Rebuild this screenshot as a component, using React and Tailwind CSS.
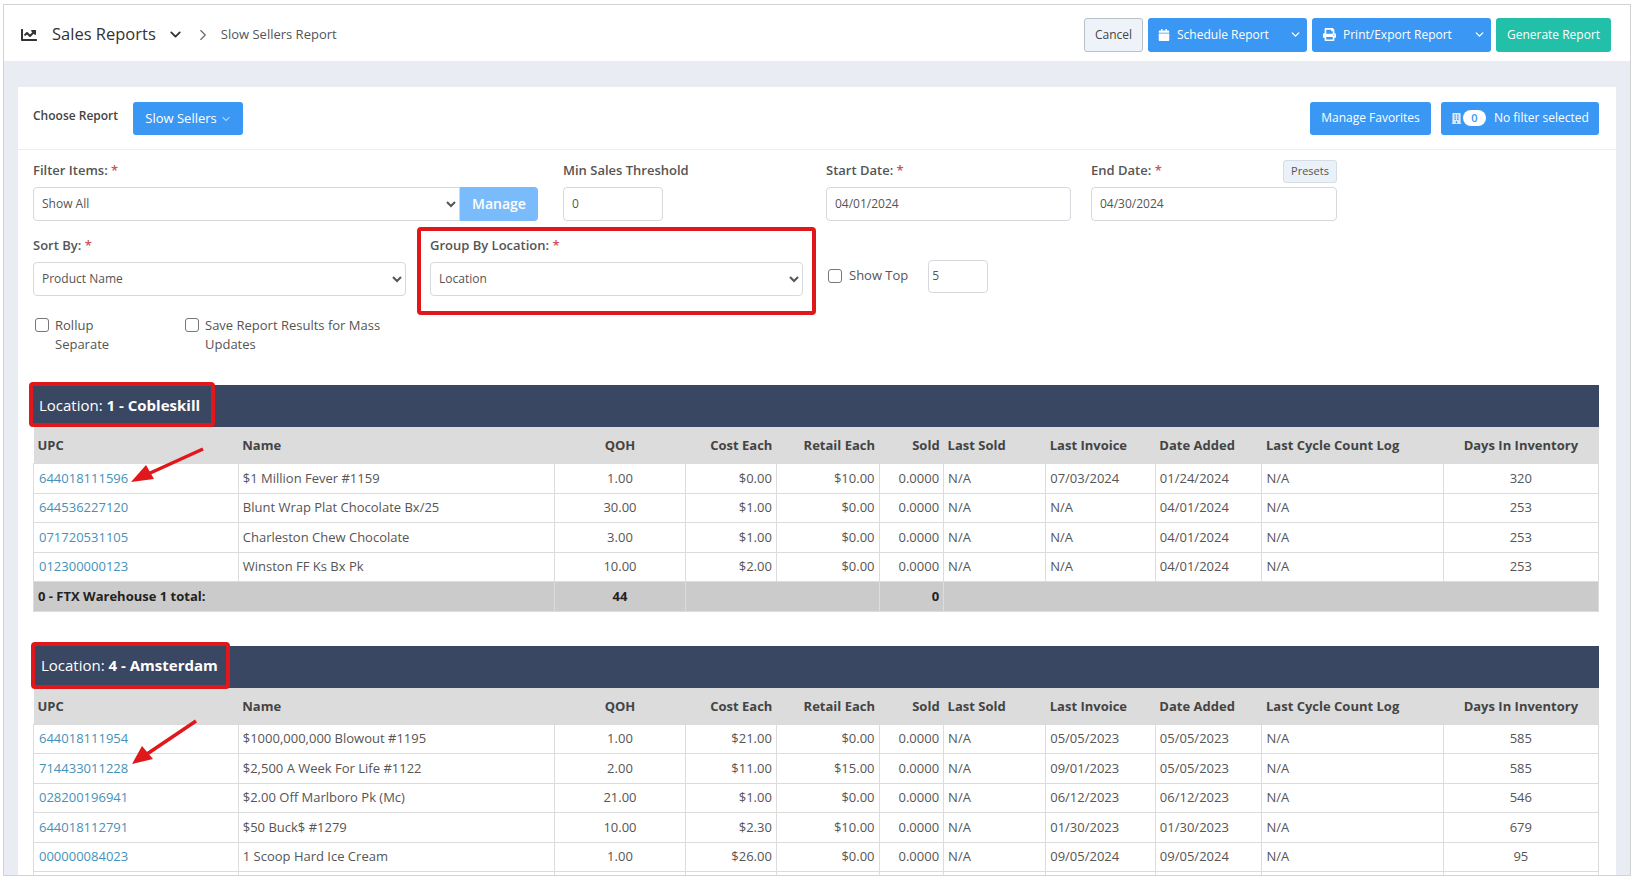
import { ChevronDown, ChevronRight } from "lucide-react";
import { FaBuilding, FaCalendar, FaChartLine, FaPrint } from "react-icons/fa";

const columns = [
  "w-[204.5px]",
  "w-[315.5px]",
  "w-[131.5px]",
  "w-[90.5px]",
  "w-[102.5px]",
  "w-[64.5px]",
  "w-[102px]",
  "w-[109.5px]",
  "w-[106.5px]",
  "w-[181px]",
  "w-[155px]",
];

const coblekillRows = [
  ["644018111596", "$1 Million Fever #1159", "1.00", "$0.00", "$10.00", "0.0000", "N/A", "07/03/2024", "01/24/2024", "N/A", "320"],
  ["644536227120", "Blunt Wrap Plat Chocolate Bx/25", "30.00", "$1.00", "$0.00", "0.0000", "N/A", "N/A", "04/01/2024", "N/A", "253"],
  ["071720531105", "Charleston Chew Chocolate", "3.00", "$1.00", "$0.00", "0.0000", "N/A", "N/A", "04/01/2024", "N/A", "253"],
  ["012300000123", "Winston FF Ks Bx Pk", "10.00", "$2.00", "$0.00", "0.0000", "N/A", "N/A", "04/01/2024", "N/A", "253"],
];

const amsterdamRows = [
  ["644018111954", "$1000,000,000 Blowout #1195", "1.00", "$21.00", "$0.00", "0.0000", "N/A", "05/05/2023", "05/05/2023", "N/A", "585"],
  ["714433011228", "$2,500 A Week For Life #1122", "2.00", "$11.00", "$15.00", "0.0000", "N/A", "09/01/2023", "05/05/2023", "N/A", "585"],
  ["028200196941", "$2.00 Off Marlboro Pk (Mc)", "21.00", "$1.00", "$0.00", "0.0000", "N/A", "06/12/2023", "06/12/2023", "N/A", "546"],
  ["644018112791", "$50 Buck$ #1279", "10.00", "$2.30", "$10.00", "0.0000", "N/A", "01/30/2023", "01/30/2023", "N/A", "679"],
  ["000000084023", "1 Scoop Hard Ice Cream", "1.00", "$26.00", "$0.00", "0.0000", "N/A", "09/05/2024", "09/05/2024", "N/A", "95"],
  ["", "", "", "", "", "", "", "", "", "", ""],
];

const Star = () => <span className="text-[#c9535b]"> *</span>;

function Label({ children, required }) {
  return (
    <label className="block h-[20px] whitespace-nowrap text-[13px] leading-[20px] font-semibold text-[#555]">
      {children}
      {required && <Star />}
    </label>
  );
}

function Select({ value, className }) {
  return (
    <select
      defaultValue={value}
      className={`h-[34px] rounded-[4px] border border-[#d5d8dc] bg-white pb-[2px] pl-[4px] pr-[2px] text-[12px] text-[#555] ${className}`}
    >
      <option>{value}</option>
    </select>
  );
}

function Field({ value, className }) {
  return (
    <input
      readOnly
      defaultValue={value}
      className={`rounded-[4px] border border-[#d5d8dc] bg-white pb-[2px] text-[12px] text-[#555] ${className}`}
    />
  );
}

function Checkbox() {
  return <input type="checkbox" className="h-[14px] w-[14px] shrink-0 appearance-none rounded-[3px] border border-[#777] bg-white" />;
}

function ReportTable({ title, rows, total, pad, children }) {
  const cell = "border border-[#dcdcdc] px-[4px] text-[13px] text-[#555] whitespace-nowrap";
  const head = "px-[4px] pt-[2px] text-[13px] font-bold text-[#444] whitespace-nowrap";
  return (
    <div className="relative">
      <div className={`flex h-[42px] items-center bg-[#3a4762] pb-[2px] text-[15px] text-white ${pad}`}>
        <span>
          Location: <b>{title}</b>
        </span>
      </div>
      <table className="w-full table-fixed border-collapse">
        <colgroup>
          {columns.map((w, i) => (
            <col key={i} className={w} />
          ))}
        </colgroup>
        <thead>
          <tr className="h-[36.5px] bg-[#dcdcdc]">
            <th className={`${head} text-left`}>UPC</th>
            <th className={`${head} text-left`}>Name</th>
            <th className={`${head} text-center`}>QOH</th>
            <th className={`${head} text-right`}>Cost Each</th>
            <th className={`${head} text-right`}>Retail Each</th>
            <th className={`${head} text-right`}>Sold</th>
            <th className={`${head} text-left`}>Last Sold</th>
            <th className={`${head} text-left`}>Last Invoice</th>
            <th className={`${head} text-left`}>Date Added</th>
            <th className={`${head} text-left`}>Last Cycle Count Log</th>
            <th className={`${head} text-center`}>Days In Inventory</th>
          </tr>
        </thead>
        <tbody>
          {rows.map((r, i) => (
            <tr key={i} className="h-[29.5px]">
              <td className={`${cell} !pl-[5px] !text-[#4592b8]`}>{r[0]}</td>
              <td className={cell}>{r[1]}</td>
              <td className={`${cell} text-center`}>{r[2]}</td>
              <td className={`${cell} text-right`}>{r[3]}</td>
              <td className={`${cell} text-right`}>{r[4]}</td>
              <td className={`${cell} text-right`}>{r[5]}</td>
              <td className={cell}>{r[6]}</td>
              <td className={cell}>{r[7]}</td>
              <td className={cell}>{r[8]}</td>
              <td className={cell}>{r[9]}</td>
              <td className={`${cell} text-center`}>{r[10]}</td>
            </tr>
          ))}
          {total && (
            <tr className="h-[29.5px] bg-[#cbcbcb] text-[13px] font-bold text-[#222]">
              <td colSpan={2} className="border border-[#dcdcdc] px-[4px]">{total.label}</td>
              <td className="border border-[#dcdcdc] px-[4px] text-center">{total.qoh}</td>
              <td colSpan={2} className="border border-[#dcdcdc]" />
              <td className="border border-[#dcdcdc] px-[4px] text-right">{total.sold}</td>
              <td colSpan={5} className="border border-[#dcdcdc]" />
            </tr>
          )}
        </tbody>
      </table>
      {children}
    </div>
  );
}

function Arrow({ className, viewBox, d, head }) {
  return (
    <svg className={`pointer-events-none absolute ${className}`} viewBox={viewBox} fill="none">
      <path d={d} stroke="#e0181c" strokeWidth="3.5" />
      <path d={head} fill="#e0181c" />
    </svg>
  );
}

export default function App() {
  return (
    <div className="h-[877px] w-[1634px] overflow-hidden bg-white pl-[3px] pr-[3px] pt-[4px] font-['Open_Sans',sans-serif]">
      <div className="h-[872px] overflow-hidden border border-[#d2d2d2] bg-[#eaecf4]">
        {/* Top bar */}
        <div className="flex h-[56px] items-center justify-between bg-white pl-[17px] pr-[19px] pt-[3px]">
          <div className="flex items-center text-[#333]">
            <FaChartLine size={16} />
            <span className="ml-[15px] text-[16.5px]">Sales Reports</span>
            <ChevronDown size={17} strokeWidth={2.6} className="ml-[11px]" />
            <ChevronRight size={18} strokeWidth={1.5} className="ml-[10px] text-[#666]" />
            <span className="ml-[9px] text-[13px] text-[#555]">Slow Sellers Report</span>
          </div>
          <div className="flex h-[34px] gap-[5px] text-[12px] text-white">
            <button className="w-[59px] rounded-[3px] border border-[#b9c0c8] bg-[#eef3f9] text-[#444]">Cancel</button>
            <button className="flex w-[159px] items-center rounded-[3px] bg-[#3a97f3] pl-[10px]">
              <FaCalendar size={12} />
              <span className="ml-[7px]">Schedule Report</span>
              <ChevronDown size={13} strokeWidth={2.5} className="ml-auto mr-[5px]" />
            </button>
            <button className="flex w-[179px] items-center rounded-[3px] bg-[#3a97f3] pl-[11px]">
              <FaPrint size={13} />
              <span className="ml-[7px]">Print/Export Report</span>
              <ChevronDown size={13} strokeWidth={2.5} className="ml-auto mr-[5px]" />
            </button>
            <button className="w-[115px] rounded-[3px] bg-[#22bfa9]">Generate Report</button>
          </div>
        </div>

        {/* Card */}
        <div className="mx-[14px] mt-[26px] h-[800px] bg-white">
          <div className="flex h-[63px] items-start border-b border-[#eeeeee] pl-[15px] pr-[17px] pt-[15px]">
            <span className="mt-[5px] text-[12px] font-semibold text-[#444]">Choose Report</span>
            <button className="ml-[15px] flex h-[33px] w-[110px] items-center justify-center gap-[3px] rounded-[3px] bg-[#3a97f3] pl-[1px] text-[13px] text-white">
              Slow Sellers
              <ChevronDown size={12} strokeWidth={2} />
            </button>
            <button className="ml-auto h-[33px] w-[121px] rounded-[3px] bg-[#3a97f3] pb-[1px] text-[12px] text-white">Manage Favorites</button>
            <button className="ml-[10px] flex h-[33px] w-[158px] items-center rounded-[3px] bg-[#3a97f3] pb-[1px] pl-[10px] text-[12px] text-white">
              <FaBuilding size={11} className="text-[#dbe9fb]" />
              <span className="ml-[1px] flex h-[16px] w-[23px] items-center justify-center rounded-full bg-white text-[11px] font-semibold text-[#3a97f3]">0</span>
              <span className="ml-[8px]">No filter selected</span>
            </button>
          </div>

          <div className="pl-[15px] pr-[17px] pt-[10px]">
            {/* Filter row */}
            <div className="flex items-start">
              <div className="w-[505px]">
                <Label required>Filter Items:</Label>
                <div className="mt-[7px] flex">
                  <Select value="Show All" className="w-[427px] rounded-r-none" />
                  <button className="h-[34px] w-[78px] rounded-r-[4px] bg-[#7abcfb] pb-[1px] text-[14px] font-semibold text-white">Manage</button>
                </div>
              </div>
              <div className="ml-[25px] w-[100px]">
                <Label>Min Sales Threshold</Label>
                <Field value="0" className="mt-[7px] h-[34px] w-[100px] pl-[8px]" />
              </div>
              <div className="ml-[163px] w-[245px]">
                <Label required>Start Date:</Label>
                <Field value="04/01/2024" className="mt-[7px] h-[34px] w-[245px] pl-[8px]" />
              </div>
              <div className="relative ml-[20px] w-[246px]">
                <Label required>End Date:</Label>
                <Field value="04/30/2024" className="mt-[7px] h-[34px] w-[246px] pl-[8px]" />
                <button className="absolute right-0 top-0 h-[23px] w-[54px] rounded-[3px] border border-[#d4dde8] bg-[#eaf1f8] text-[11px] text-[#555]">Presets</button>
              </div>
            </div>

            {/* Sort row */}
            <div className="mt-[14px] flex items-start">
              <div className="w-[373px]">
                <Label required>Sort By:</Label>
                <Select value="Product Name" className="mt-[7px] w-[373px]" />
              </div>
              <div className="relative ml-[24px] w-[373px]">
                <Label required>Group By Location:</Label>
                <Select value="Location" className="mt-[7px] w-[373px]" />
                <div className="pointer-events-none absolute inset-x-[-13px] bottom-[-19px] top-[-8px] rounded-[4px] border-[4px] border-[#e0181c]" />
              </div>
              <div className="ml-[25px] mt-[23px] flex items-center">
                <Checkbox />
                <span className="ml-[7px] text-[13px] text-[#555]">Show Top</span>
                <Field value="5" className="ml-[20px] mt-[2px] h-[33px] w-[60px] pl-[3px]" />
              </div>
            </div>

            {/* Options */}
            <div className="mt-[20px] flex items-start text-[13px] leading-[19px] text-[#555]">
              <div className="flex w-[152px] items-start">
                <span className="ml-[2px] mt-[2px] flex"><Checkbox /></span>
                <span className="ml-[6px] w-[70px]">Rollup Separate</span>
              </div>
              <div className="flex w-[215px] items-start">
                <span className="mt-[2px] flex"><Checkbox /></span>
                <span className="ml-[6px]">Save Report Results for Mass Updates</span>
              </div>
            </div>

            {/* Results */}
            <div className="mt-[31px]">
              <ReportTable title="1 - Cobleskill" rows={coblekillRows} pad="pl-[6px]" total={{ label: "0 - FTX Warehouse 1 total:", qoh: "44", sold: "0" }}>
                <div className="pointer-events-none absolute left-[-4px] top-[-3px] h-[45px] w-[186px] rounded-[4px] border-[4px] border-[#e0181c]" />
                <Arrow className="left-[95px] top-[61px] h-[38px] w-[78px]" viewBox="0 0 78 38" d="M75 3 L20 28" head="M3 36 L18 19 L26 33 Z" />
              </ReportTable>
            </div>
            <div className="mt-[34px]">
              <ReportTable title="4 - Amsterdam" rows={amsterdamRows} pad="pl-[8px]">
                <div className="pointer-events-none absolute left-[-2px] top-[-4px] h-[47px] w-[199px] rounded-[4px] border-[4px] border-[#e0181c]" />
                <Arrow className="left-[96px] top-[72px] h-[48px] w-[70px]" viewBox="0 0 70 48" d="M67 3 L18 36" head="M3 46 L13 28 L24 41 Z" />
              </ReportTable>
            </div>
          </div>
        </div>
      </div>
    </div>
  );
}
